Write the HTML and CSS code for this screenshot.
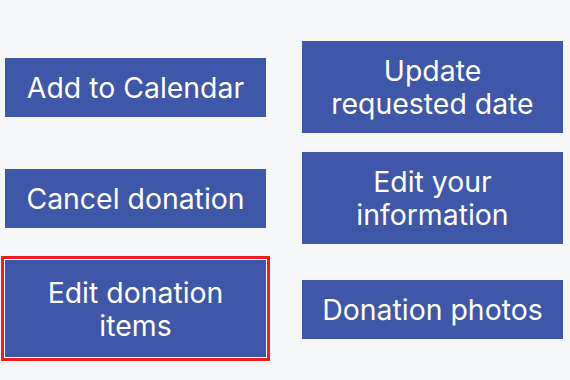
FILE: index.html
```html
<!DOCTYPE html>
<html>
<head>
<meta charset="utf-8">
<link rel="stylesheet" href="styles.css">
</head>
<body>
<div class="actions">
  <button class="btn">Add to Calendar</button>
  <button class="btn">Update<br>requested date</button>
  <button class="btn">Cancel donation</button>
  <button class="btn">Edit your<br>information</button>
  <button class="btn btn-focus">Edit donation<br>items</button>
  <button class="btn">Donation photos</button>
</div>
</body>
</html>
```
FILE: styles.css
```css
html, body {
  margin: 0;
  padding: 0;
  background: #f6f7f9;
}
body {
  padding: 41px 7px 25px 5px;
  font-family: Inter, "Noto Sans", sans-serif;
}
.actions {
  display: grid;
  grid-template-columns: 261px 261px;
  grid-template-rows: 92px 92px 92px;
  column-gap: 36px;
  row-gap: 19px;
  align-items: center;
}
.btn {
  display: block;
  width: 261px;
  margin: 0;
  padding: 13px 4px;
  border: none;
  border-radius: 0;
  background: #3e57a8;
  color: #ffffff;
  font-family: inherit;
  font-size: 28.4px;
  line-height: 33px;
  text-align: center;
}
.btn-focus {
  height: 97px;
  margin: -3px 0 -2px;
  padding: 0 4px;
  box-shadow: 0 0 0 1px #ffffff, 0 0 0 4px #ee1c25;
}
```
